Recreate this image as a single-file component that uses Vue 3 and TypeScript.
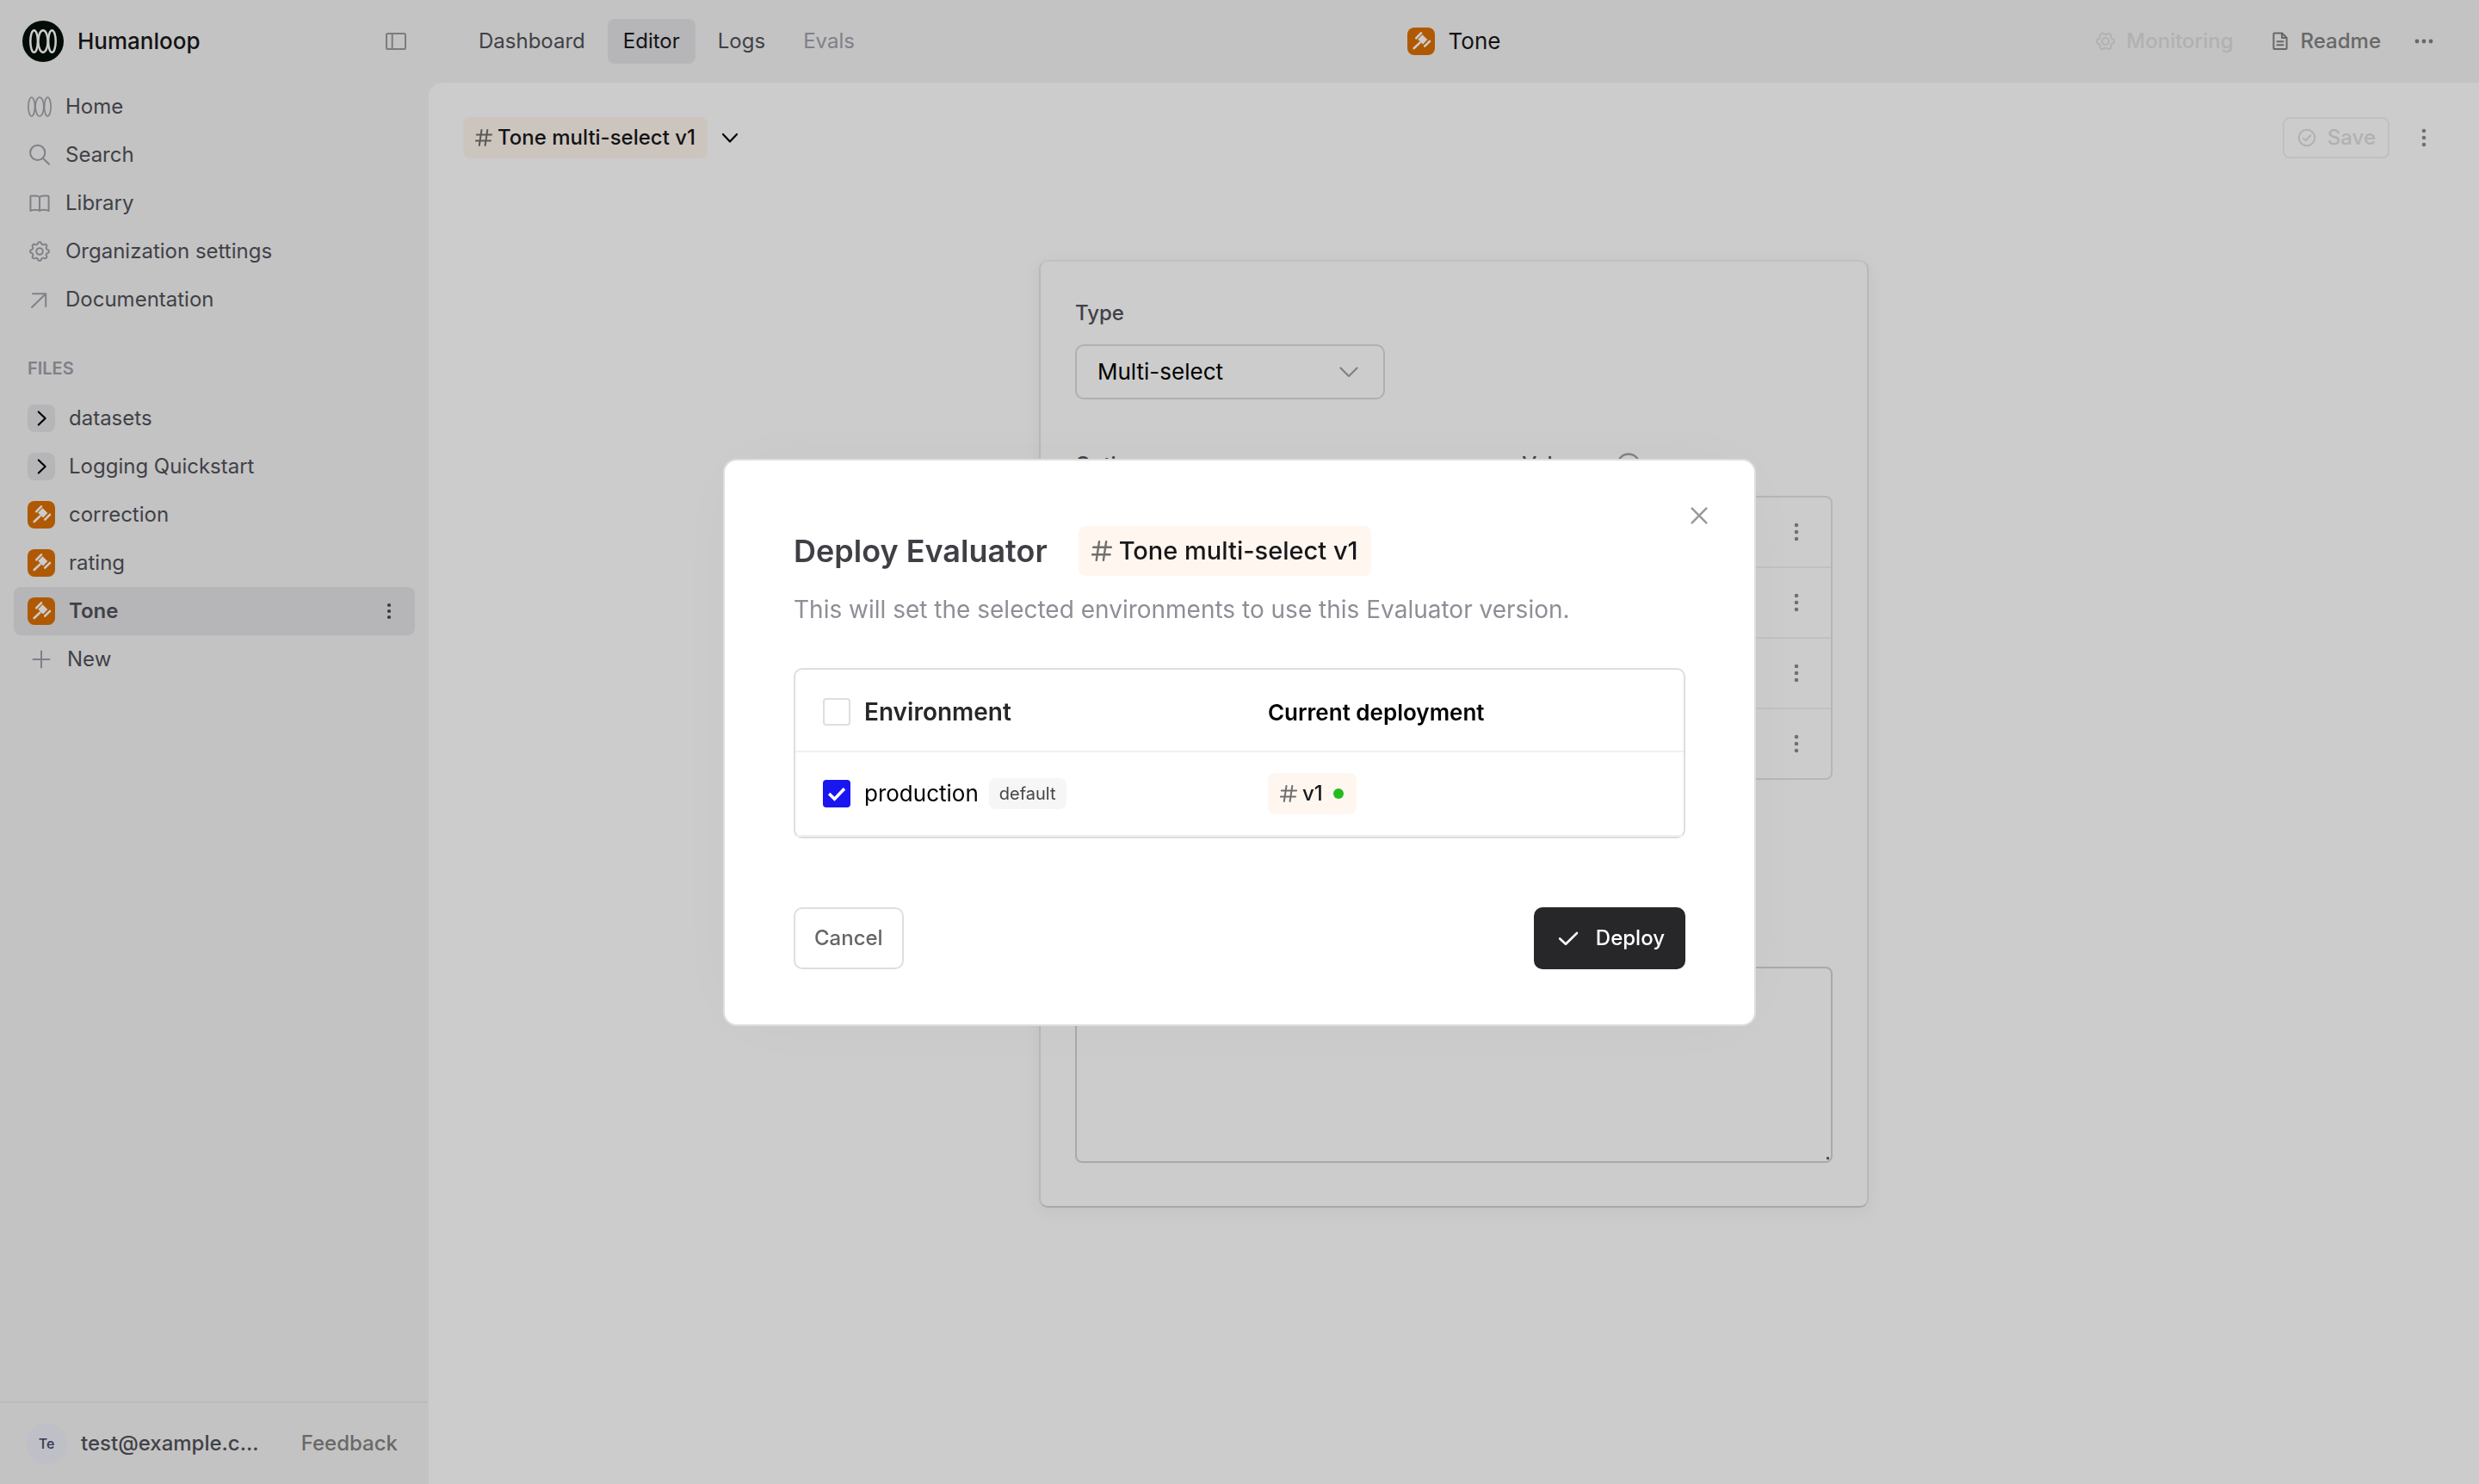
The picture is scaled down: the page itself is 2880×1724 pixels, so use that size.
<script setup lang="ts">
import { ref } from 'vue'

const navItems = [
  { label: 'Home', icon: 'loops' },
  { label: 'Search', icon: 'search' },
  { label: 'Library', icon: 'book' },
  { label: 'Organization settings', icon: 'gear' },
  { label: 'Documentation', icon: 'arrow' },
]

const files = [
  { name: 'datasets', folder: true },
  { name: 'Logging Quickstart', folder: true },
  { name: 'correction', folder: false },
  { name: 'rating', folder: false },
  { name: 'Tone', folder: false, active: true },
]

const tabs = [
  { label: 'Dashboard', state: '' },
  { label: 'Editor', state: 'current' },
  { label: 'Logs', state: '' },
  { label: 'Evals', state: 'muted' },
]

const evaluatorType = ref('Multi-select')
const selectAll = ref(false)
const production = ref(true)

/** Closed outline of a cog with rounded teeth, centred in a square box. */
function cog(center: number, radius: number, depth: number, teeth: number): string {
  const points: string[] = []
  const steps = teeth * 16
  for (let i = 0; i < steps; i++) {
    const angle = (i / steps) * Math.PI * 2
    const wave = Math.tanh(1.8 * Math.cos(teeth * angle))
    const r = radius + depth * wave
    points.push(`${(center + r * Math.cos(angle)).toFixed(2)} ${(center + r * Math.sin(angle)).toFixed(2)}`)
  }
  return `M${points.join('L')}Z`
}
const settingsCog = cog(14, 9.7, 1.2, 8)
const monitoringCog = cog(12, 9, 1.1, 6)
</script>

<template>
  <div class="app">
    <aside class="sidebar">
      <div class="brand">
        <svg class="logo" viewBox="0 0 48 48" aria-hidden="true">
          <circle cx="24" cy="24" r="24" fill="#05100a" />
          <g fill="none" stroke="#fff" stroke-width="2.5">
            <ellipse cx="13.6" cy="24" rx="4.3" ry="12.8" />
            <ellipse cx="24" cy="24" rx="5.6" ry="12.8" />
            <ellipse cx="34.4" cy="24" rx="4.3" ry="12.8" />
          </g>
        </svg>
        <span class="brand-name">Humanloop</span>
        <button class="icon-btn collapse" type="button" aria-label="Toggle sidebar">
          <svg width="24" height="24" viewBox="0 0 24 24" fill="none" stroke="#9c9c9c" stroke-width="2">
            <rect x="1" y="3" width="22" height="18" rx="1.5" />
            <path d="M7.7 3v18" />
          </svg>
        </button>
      </div>

      <nav class="nav">
        <a v-for="item in navItems" :key="item.label" class="row" href="#">
          <svg class="nav-icon" viewBox="0 0 28 28" fill="none" stroke="#a1a1aa" stroke-width="2" stroke-linecap="round" stroke-linejoin="round" aria-hidden="true">
            <g v-if="item.icon === 'loops'" stroke-width="1.7">
              <ellipse cx="4.7" cy="14" rx="3.8" ry="11" />
              <ellipse cx="14" cy="14" rx="4.9" ry="11" />
              <ellipse cx="23.3" cy="14" rx="3.8" ry="11" />
            </g>
            <g v-else-if="item.icon === 'search'">
              <circle cx="11.7" cy="11.4" r="8.6" />
              <path d="M18 18l7 6.8" />
            </g>
            <path v-else-if="item.icon === 'book'" d="M14 7C12.6 5.6 11.5 5.6 9.5 5.6H4.6Q3.400 5.6 3.400 6.800V23Q5 21.7 9 21.7T14 23Q15 21.7 19 21.7T24.6 23V6.800Q24.6 5.6 23.400 5.6H18.5C16.5 5.6 15.400 5.6 14 7V23" />
            <g v-else-if="item.icon === 'gear'">
              <path :d="settingsCog" />
              <circle cx="14" cy="14" r="3.8" />
            </g>
            <path v-else d="M5 23L21 7.5M6 7.2H21.2V22" />
          </svg>
          <span>{{ item.label }}</span>
        </a>
      </nav>

      <h2 class="section-title">FILES</h2>
      <nav class="files">
        <div v-for="file in files" :key="file.name" class="row file" :class="{ active: file.active }">
          <a href="#" class="file-link">
            <span v-if="file.folder" class="chip folder">
              <svg viewBox="0 0 32 32" fill="none" stroke="#000" stroke-width="2.2" stroke-linecap="round" stroke-linejoin="round" aria-hidden="true"><path d="M12.8 8.5L20.6 16l-7.8 7.5" /></svg>
            </span>
            <span v-else class="chip evaluator">
              <svg viewBox="0 0 32 32" fill="none" stroke="#fff" stroke-width="2.6" stroke-linecap="round" aria-hidden="true">
                <path d="M10.2 12.4l5.8-6M20.2 21.6l5.8-5.7M7.7 24l6.8-6.4" />
                <path d="M17.5 8.200l5.8 5.8-5.200 5.400-5.900-5.600z" fill="#fff" stroke="none" />
              </svg>
            </span>
            <span>{{ file.name }}</span>
          </a>
          <button v-if="file.active" class="icon-btn" type="button" aria-label="File actions">
            <svg width="28" height="28" viewBox="0 0 28 28" fill="#48484f"><circle cx="14" cy="7" r="2.1" /><circle cx="14" cy="14" r="2.1" /><circle cx="14" cy="21" r="2.1" /></svg>
          </button>
        </div>
        <button class="row new" type="button">
          <svg class="plus" viewBox="0 0 32 32" fill="none" stroke="#a1a1aa" stroke-width="2" stroke-linecap="round" aria-hidden="true"><path d="M6.5 16h19M16 6.5v19" /></svg>
          <span>New</span>
        </button>
      </nav>

      <footer class="account">
        <span class="avatar">Te</span>
        <span class="email">test@example.c...</span>
        <a class="feedback" href="#">Feedback</a>
      </footer>
    </aside>

    <div class="workspace">
      <header class="topbar">
        <nav class="tabs">
          <a v-for="tab in tabs" :key="tab.label" href="#" class="tab" :class="tab.state">{{ tab.label }}</a>
        </nav>
        <h1 class="page-title">
          <span class="chip evaluator">
            <svg viewBox="0 0 32 32" fill="none" stroke="#fff" stroke-width="2.6" stroke-linecap="round" aria-hidden="true">
              <path d="M10.2 12.4l5.8-6M20.2 21.6l5.8-5.7M7.7 24l6.8-6.4" />
              <path d="M17.5 8.200l5.8 5.8-5.200 5.400-5.900-5.600z" fill="#fff" stroke="none" />
            </svg>
          </span>
          Tone
        </h1>
        <div class="top-actions">
          <button class="text-btn disabled" type="button" disabled>
            <svg width="24" height="24" viewBox="0 0 24 24" fill="none" stroke="currentColor" stroke-width="2" aria-hidden="true">
              <path :d="monitoringCog" />
              <circle cx="12" cy="12" r="4" />
            </svg>
            Monitoring
          </button>
          <button class="text-btn" type="button">
            <svg width="24" height="24" viewBox="0 0 24 24" fill="none" stroke="currentColor" stroke-width="2" stroke-linejoin="round" aria-hidden="true">
              <path d="M14.2 2.5H5.300Q4.400 2.5 4.400 3.400V20Q4.400 21 5.300 21H18.7Q19.6 21 19.6 20V8z" />
              <path d="M14 3v5h5" />
              <path d="M8.5 12.3h7M8.5 16.2h7" stroke-linecap="round" />
            </svg>
            Readme
          </button>
          <button class="icon-btn" type="button" aria-label="More actions">
            <svg width="32" height="32" viewBox="0 0 32 32" fill="#828282"><circle cx="8" cy="16" r="2.4" /><circle cx="16" cy="16" r="2.4" /><circle cx="24" cy="16" r="2.4" /></svg>
          </button>
        </div>
      </header>

      <main class="canvas">
        <div class="toolbar">
          <span class="tag">
            <svg class="hash" viewBox="0 0 20 20" aria-hidden="true"><path d="M1.8 6.4h17.4M.8 13.6h17.2M7.5 1L4.800 19M14.3 1l-2.7 18" /></svg>
            Tone multi-select v1
          </span>
          <button class="icon-btn" type="button" aria-label="Switch version">
            <svg width="24" height="24" viewBox="0 0 24 24" fill="none" stroke="#000" stroke-width="2.2" stroke-linecap="round" stroke-linejoin="round"><path d="M4 8l8 8.5 8-8.5" /></svg>
          </button>
          <button class="save" type="button" disabled>
            <svg width="24" height="24" viewBox="0 0 24 24" fill="none" stroke="currentColor" stroke-width="2" stroke-linecap="round" stroke-linejoin="round" aria-hidden="true"><circle cx="12" cy="12" r="9.3" /><path d="M8 12.7l2.7 2.6 5.6-6" /></svg>
            Save
          </button>
          <button class="icon-btn" type="button" aria-label="Version actions">
            <svg width="32" height="32" viewBox="0 0 32 32" fill="#8c8c8c"><circle cx="16" cy="8" r="2.3" /><circle cx="16" cy="16" r="2.3" /><circle cx="16" cy="24" r="2.3" /></svg>
          </button>
        </div>

        <section class="card">
          <label class="label" for="evaluator-type">Type</label>
          <div class="select-wrap">
            <select id="evaluator-type" v-model="evaluatorType">
              <option>Multi-select</option>
            </select>
            <svg class="caret" viewBox="0 0 24 24" fill="none" stroke="#a1a1aa" stroke-width="2.2" stroke-linecap="round" stroke-linejoin="round" aria-hidden="true"><path d="M2.5 7.5l9.5 9.5 9.5-9.5" /></svg>
          </div>

          <div class="option-head">
            <span class="label">Options</span>
            <span class="label">Value</span>
            <svg width="28" height="28" viewBox="0 0 28 28" fill="none" stroke="#a1a1aa" stroke-width="2.4" aria-hidden="true"><circle cx="14" cy="14" r="12.5" /></svg>
          </div>
          <ul class="options">
            <li v-for="n in 4" :key="n">
              <button class="icon-btn" type="button" aria-label="Option actions">
                <svg width="32" height="32" viewBox="0 0 32 32" fill="#8c8c8c"><circle cx="16" cy="8" r="2.3" /><circle cx="16" cy="16" r="2.3" /><circle cx="16" cy="24" r="2.3" /></svg>
              </button>
            </li>
          </ul>

          <div class="notes">
            <textarea aria-label="Instructions"></textarea>
          </div>
        </section>
      </main>
    </div>

    <div class="overlay">
      <div class="modal" role="dialog" aria-modal="true" aria-labelledby="deploy-title">
        <button class="icon-btn close" type="button" aria-label="Close">
          <svg width="24" height="24" viewBox="0 0 24 24" fill="none" stroke="#999" stroke-width="2.6" stroke-linecap="round"><path d="M3.7 3.7l16.6 16.6M20.3 3.7L3.7 20.3" /></svg>
        </button>
        <div class="modal-head">
          <h2 id="deploy-title">Deploy Evaluator</h2>
          <span class="tag large">
            <svg class="hash" viewBox="0 0 20 20" aria-hidden="true"><path d="M1.8 6.4h17.4M.8 13.6h17.2M7.5 1L4.800 19M14.3 1l-2.7 18" /></svg>
            Tone multi-select v1
          </span>
        </div>
        <p class="lead">This will set the selected environments to use this Evaluator version.</p>

        <table class="envs">
          <thead>
            <tr>
              <th scope="col">
                <label class="check heading">
                  <input v-model="selectAll" type="checkbox" />
                  <span>Environment</span>
                </label>
              </th>
              <th scope="col">Current deployment</th>
            </tr>
          </thead>
          <tbody>
            <tr>
              <td>
                <label class="check">
                  <span class="box">
                    <input v-model="production" type="checkbox" />
                    <svg v-if="production" viewBox="0 0 32 32" fill="none" stroke="#fff" stroke-width="3.6" aria-hidden="true"><path d="M7.2 16l6.3 6.2L25 10.2" /></svg>
                  </span>
                  <span>production</span>
                  <span class="badge">default</span>
                </label>
              </td>
              <td>
                <span class="tag">
                  <svg class="hash" viewBox="0 0 20 20" aria-hidden="true"><path d="M1.8 6.4h17.4M.8 13.6h17.2M7.5 1L4.800 19M14.3 1l-2.7 18" /></svg>
                  v1
                  <span class="dot"></span>
                </span>
              </td>
            </tr>
          </tbody>
        </table>

        <div class="modal-actions">
          <button class="cancel" type="button">Cancel</button>
          <button class="deploy" type="button">
            <svg width="28" height="28" viewBox="0 0 28 28" fill="none" stroke="#fff" stroke-width="2.6" stroke-linecap="round" stroke-linejoin="round" aria-hidden="true"><path d="M4.200 14.5l6.8 6.3L24 8" /></svg>
            Deploy
          </button>
        </div>
      </div>
    </div>
  </div>
</template>

<style>
body {
  margin: 0;
}
</style>

<style scoped>
.app {
  display: flex;
  min-height: 100vh;
  background: #f4f4f4;
  color: #52525b;
  font: 400 24px/32px Inter, "Liberation Sans", sans-serif;
}
.app *,
.app *::after {
  box-sizing: border-box;
}
a {
  color: inherit;
  text-decoration: none;
}
button {
  display: inline-flex;
  align-items: center;
  margin: 0;
  padding: 0;
  border: 0;
  background: none;
  color: inherit;
  font: inherit;
}
svg {
  display: block;
  flex: none;
}
h1,
h2,
p,
ul {
  margin: 0;
  padding: 0;
}

/* sidebar */
.sidebar {
  display: flex;
  flex: none;
  flex-direction: column;
  width: 496px;
  margin-right: 2px;
}
.brand {
  display: flex;
  align-items: center;
  height: 96px;
  padding: 0 24px 0 26px;
}
.logo {
  width: 48px;
  height: 48px;
  margin-right: 16px;
}
.brand-name {
  color: #18181b;
  font-size: 26px;
  font-weight: 500;
}
.collapse {
  margin-left: auto;
}
.row {
  display: flex;
  align-items: center;
  height: 56px;
  padding: 0 16px;
  border-radius: 8px;
}
.nav,
.files {
  display: flex;
  flex-direction: column;
  padding: 0 14px 0 16px;
}
.nav .row {
  gap: 16px;
}
.nav-icon {
  width: 28px;
  height: 28px;
}
.section-title {
  margin: 36px 0 14px 32px;
  color: #a1a1aa;
  font-size: 20px;
  font-weight: 600;
  line-height: 32px;
}
.file-link {
  display: flex;
  flex: 1;
  align-items: center;
  gap: 16px;
}
.chip {
  width: 32px;
  height: 32px;
  border-radius: 8px;
}
.folder {
  background: #e4e4e7;
}
.evaluator {
  background: #dc7006;
}
.active {
  background: #e4e4e7;
  font-weight: 600;
}
.new {
  gap: 14px;
}
.plus {
  width: 32px;
  height: 32px;
}
.account {
  display: flex;
  align-items: center;
  height: 96px;
  margin-top: auto;
  padding: 0 34px 0 30px;
  border-top: 2px solid #eaeaea;
  font-weight: 500;
}
.avatar {
  width: 48px;
  height: 48px;
  margin-right: 16px;
  border-radius: 50%;
  background: #eff0f9;
  color: #45456a;
  font-size: 16px;
  font-weight: 500;
  line-height: 48px;
  text-align: center;
}
.feedback {
  margin-left: auto;
  color: #848484;
}

/* top bar */
.workspace {
  display: flex;
  flex: 1;
  flex-direction: column;
  min-width: 0;
}
.topbar {
  display: grid;
  grid-template-columns: 1fr auto 1fr;
  align-items: center;
  height: 96px;
  padding: 0 48px 0 40px;
}
.tabs {
  display: flex;
  gap: 8px;
}
.tab {
  padding: 10px 18px;
  border-radius: 8px;
}
.current {
  background: #e4e4e7;
  color: #18181b;
}
.muted {
  color: #a1a1aa;
}
.page-title {
  display: flex;
  align-items: center;
  gap: 16px;
  margin-left: 8px;
  color: #18181b;
  font-size: 26px;
  font-weight: 400;
}
.top-actions {
  display: flex;
  align-items: center;
  justify-content: flex-end;
}
.text-btn {
  gap: 12px;
  margin-right: 42px;
  color: #828282;
  font-weight: 500;
}
.text-btn + .icon-btn {
  margin-left: -8px;
}
.disabled {
  color: #dedede;
}

/* editor */
.canvas {
  flex: 1;
  padding: 40px;
  border-radius: 16px 0 0 0;
  background: #fff;
}
.toolbar {
  display: flex;
  align-items: center;
  padding-right: 8px;
}
.tag {
  display: inline-flex;
  align-items: center;
  gap: 6px;
  height: 48px;
  padding: 0 14px;
  border-radius: 8px;
  background: #fff6ef;
  color: #18181b;
  font-size: 24px;
  font-weight: 500;
  white-space: nowrap;
}
.hash {
  width: 20px;
  height: 20px;
  fill: none;
  stroke: #71706f;
  stroke-width: 2;
  stroke-linecap: round;
}
.toolbar .tag {
  margin-right: 14px;
  background: #fff7ee;
}
.save {
  gap: 12px;
  height: 48px;
  margin: 0 24px 0 auto;
  padding: 0 14px;
  border: 2px solid #f0f0f0;
  border-radius: 8px;
  color: #dedede;
  font-weight: 500;
}
.card {
  max-width: 964px;
  margin: 118px auto 0;
  padding: 40px 40px 50px;
  border: 2px solid;
  border-color: #f0f0f0 #e6e6e6 #d4d4d4;
  border-radius: 10px;
  box-shadow: 0 4px 20px rgba(0, 0, 0, 0.05);
}
.label {
  color: #52525b;
  font-weight: 500;
}
.card > .label {
  display: block;
  margin-top: 4px;
}
.select-wrap {
  position: relative;
  width: 360px;
  margin-top: 20px;
}
select {
  display: block;
  width: 100%;
  height: 64px;
  padding: 0 56px 0 24px;
  border: 2px solid #dcdcdc;
  border-radius: 10px;
  background: #fff;
  color: #000;
  font: inherit;
  font-size: 26px;
  appearance: none;
}
.caret {
  position: absolute;
  top: 20px;
  right: 30px;
  width: 24px;
  height: 24px;
  pointer-events: none;
}
.option-head {
  display: grid;
  grid-template-columns: 59% 110px auto;
  align-items: center;
  justify-content: start;
  margin-top: 60px;
}
.options {
  margin-top: 20px;
  border: 2px solid #e4e4e4;
  border-radius: 8px;
  list-style: none;
}
.options li {
  display: flex;
  align-items: center;
  justify-content: flex-end;
  height: 82px;
  padding-right: 24px;
  border-bottom: 2px solid #f0f0f0;
}
.options li:last-child {
  height: 80px;
  border-bottom: 0;
}
.notes {
  position: relative;
  margin-top: 217px;
}
.notes::after {
  position: absolute;
  right: 4px;
  bottom: 4px;
  width: 3px;
  height: 3px;
  background: #666;
  content: "";
}
textarea {
  display: block;
  width: 100%;
  height: 228px;
  padding: 16px;
  border: 2px solid #d4d4d4;
  border-radius: 8px;
  background: #fff;
  font: inherit;
  resize: none;
}

/* dialog */
.overlay {
  position: fixed;
  inset: 0;
  display: flex;
  align-items: center;
  justify-content: center;
  background: rgba(0, 0, 0, 0.2);
}
.modal {
  position: relative;
  width: 1200px;
  padding: 76px 80px 64px;
  border: 2px solid #dedede;
  border-radius: 16px;
  background: #fff;
  box-shadow: 0 0 100px rgba(0, 0, 0, 0.03);
}
.close {
  position: absolute;
  top: 52px;
  right: 52px;
}
.modal-head {
  display: flex;
  align-items: center;
  gap: 36px;
}
.modal-head h2 {
  color: #3f3f46;
  font-size: 36px;
  font-weight: 600;
  line-height: 48px;
}
.large {
  gap: 8px;
  height: 58px;
  padding: 0 15px;
  font-size: 29px;
}
.large .hash {
  width: 24px;
  height: 24px;
}
.lead {
  margin: 19px 0 48px;
  color: #8e8e96;
  font-size: 28px;
  line-height: 40px;
}
.envs {
  width: 100%;
  border: 2px solid #dedede;
  border-radius: 10px;
  border-spacing: 0;
  color: #000;
  font-size: 26px;
  table-layout: fixed;
}
.envs th,
.envs td {
  height: 98px;
  padding: 0 0 0 2px;
  border-bottom: 2px solid #f0f0f0;
  text-align: left;
}
.envs th {
  height: 96px;
  padding-top: 6px;
  font-weight: 600;
}
.envs th:first-child,
.envs td:first-child {
  width: 53%;
  padding-left: 32px;
}
.envs th:first-child {
  padding-top: 4px;
}
.check {
  display: flex;
  align-items: center;
  gap: 16px;
}
.heading {
  color: #27272a;
  font-size: 28px;
}
.check input {
  display: block;
  width: 32px;
  height: 32px;
  margin: 0;
  border: 2px solid #dedede;
  border-radius: 4px;
  background: #fff;
  appearance: none;
}
.check input:checked {
  border-color: #1a16f0;
  background: #1a16f0;
}
.box {
  position: relative;
}
.box svg {
  position: absolute;
  inset: 0;
  pointer-events: none;
}
.badge {
  height: 36px;
  margin-left: -4px;
  padding: 0 12px;
  border-radius: 8px;
  background: #f6f6f6;
  color: #454545;
  font-size: 20px;
  line-height: 36px;
}
.dot {
  width: 12px;
  height: 12px;
  margin: 0 1px 0 6px;
  border-radius: 50%;
  background: #22bb22;
}
.modal-actions {
  display: flex;
  justify-content: space-between;
  margin-top: 80px;
}
.cancel,
.deploy {
  height: 72px;
  padding: 0 22px;
  border: 2px solid #dedede;
  border-radius: 10px;
  color: #666;
  font-weight: 500;
}
.deploy {
  gap: 18px;
  padding-left: 24px;
  border-color: #27272a;
  background: #27272a;
  color: #fff;
}
</style>
